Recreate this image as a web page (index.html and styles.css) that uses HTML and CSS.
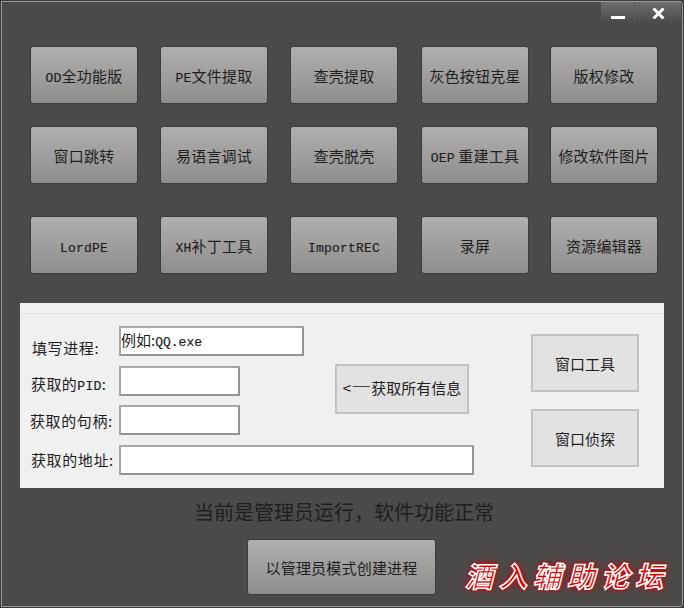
FILE: index.html
```html
<!DOCTYPE html>
<html lang="zh-CN">
<head>
<meta charset="utf-8">
<title>工具箱</title>
<link rel="stylesheet" href="styles.css">
</head>
<body>
<div class="window">
  <div class="title-bar">
    <button class="win-btn min" aria-label="最小化"><svg width="14" height="3"><rect width="14" height="3" fill="#fff"/></svg></button>
    <button class="win-btn close" aria-label="关闭"><svg width="13" height="11" viewBox="0 0 13 11"><path d="M1.5 .5 11.5 10.5M11.5 .5 1.5 10.5" stroke="#fff" stroke-width="3"/></svg></button>
  </div>
  <div class="tools">
    <button class="tool"><span class="lat">OD</span>全功能版</button>
    <button class="tool"><span class="lat">PE</span>文件提取</button>
    <button class="tool">查壳提取</button>
    <button class="tool">灰色按钮克星</button>
    <button class="tool">版权修改</button>
    <button class="tool">窗口跳转</button>
    <button class="tool">易语言调试</button>
    <button class="tool">查壳脱壳</button>
    <button class="tool"><span class="lat">OEP</span> 重建工具</button>
    <button class="tool">修改软件图片</button>
    <button class="tool lat-btn"><span class="lat">LordPE</span></button>
    <button class="tool"><span class="lat">XH</span>补丁工具</button>
    <button class="tool lat-btn"><span class="lat">ImportREC</span></button>
    <button class="tool">录屏</button>
    <button class="tool">资源编辑器</button>
  </div>
  <section class="panel">
    <div class="panel-top"></div>
    <div class="panel-body">
      <div class="form">
        <label class="label first">填写进程:</label>
        <div class="field wide-1"><span>例如:</span><span class="lat">QQ.exe</span></div>
        <label class="label second">获取的<span class="lat">PID</span>:</label>
        <div class="field row-2"></div>
        <button class="flat get-all">&lt;<span class="dash">—</span>获取所有信息</button>
        <label class="label third">获取的句柄:</label>
        <div class="field row-3"></div>
        <label class="label fourth">获取的地址:</label>
        <div class="field wide-2"></div>
      </div>
      <div class="side">
        <button class="flat side-btn">窗口工具</button>
        <button class="flat side-btn">窗口侦探</button>
      </div>
    </div>
  </section>
  <p class="status">当前是管理员运行&#65292;软件功能正常</p>
  <div class="bottom">
    <button class="tool admin">以管理员模式创建进程</button>
  </div>
  <div class="watermark">酒入辅助论坛</div>
</div>
</body>
</html>
```

FILE: styles.css
```css
* { box-sizing: border-box; }
html, body { margin: 0; padding: 0; }
body { width: 684px; height: 608px; background: #3a3a3a; overflow: hidden; }
button { margin: 0; padding: 0; font: inherit; color: inherit; cursor: default; }
.window {
  position: relative;
  width: 684px; height: 608px;
  background: #4c4a48;
  border: 1px solid #3a3a3a;
  border-radius: 0 4px 4px 0;
  box-shadow: inset 0 0 0 1px #9a9a9a;
  font-family: "Noto Sans CJK SC", "Noto Sans", sans-serif;
  font-size: 15px;
  color: #1e1e1e;
}
.lat {
  font-family: "Liberation Mono", "Noto Sans CJK SC", monospace;
  font-size: 13px;
  -webkit-text-stroke: .2px #1e1e1e;
}
.title-bar { display: flex; justify-content: flex-end; height: 45px; padding: 1px 2px 0 0; }
.win-btn {
  height: 21px; border: 0; display: flex; justify-content: center;
  background: linear-gradient(#6e6e6e, #4c4a48);
}
.min { width: 34px; align-items: flex-end; padding-bottom: 4px; border-right: 1px solid #5c5a58; }
.close { width: 46px; align-items: flex-start; padding-top: 6px; }
.tools {
  display: grid;
  grid-template-columns: 130px 130px 131px 129px 108px;
  grid-template-rows: 80px 90px 58px;
  margin-left: 29px;
}
.tool {
  width: 108px; height: 58px;
  border: 1px solid #3c3c3c; border-radius: 3px;
  background: linear-gradient(#b0afae, #8f8e8d);
  color: #1e1e1e;
  letter-spacing: .2px;
}
.lat-btn { padding-top: 1px; }
.panel {
  margin: 29px 0 0 19px; width: 644px; height: 185px;
  background: #f0f0f0;
}
.panel-top { height: 11px; border-bottom: 1px solid #e2e2e2; }
.panel-body { display: flex; padding-top: 12px; }
.form {
  display: grid;
  grid-template-columns: 99px 121px 95px 134px 5px;
  grid-template-rows: 30px 30px 30px 30px;
  row-gap: 9.5px;
  width: 454px;
  flex: none;
  height: 148px;
}
.label { grid-column: 1; font-size: 15px; white-space: nowrap; color: #1e1e1e; line-height: 30px; }
.first { grid-row: 1; padding-left: 12px; margin-top: 7px; letter-spacing: .6px; }
.second { grid-row: 2; padding-left: 11px; margin-top: 3px; letter-spacing: .4px; }
.third { grid-row: 3; padding-left: 10px; margin-top: 1px; letter-spacing: .6px; }
.fourth { grid-row: 4; padding-left: 11px; letter-spacing: .6px; }
.field {
  grid-column: 2;
  width: 121px; height: 30px;
  border: 2px solid #a8a8a8;
  background: #fff;
  border-right-color: #949494;
  border-bottom-color: #949494;
  line-height: 24px;
  white-space: nowrap;
}
.row-2 { grid-row: 2; }
.row-3 { grid-row: 3; }
.wide-1 { grid-column: 2 / 4; grid-row: 1; width: 185px; padding-left: 0; }
.wide-2 { grid-column: 2 / 6; grid-row: 4; width: 355px; }
.flat {
  border: 2px solid #c2c2c2;
  background: #e2e2e2;
  color: #1e1e1e;
}
.get-all {
  grid-column: 4; grid-row: 2 / 4;
  width: 134px; height: 50px; margin-top: -2px; padding-bottom: 2px;
  white-space: nowrap; font-size: 15px;
}
.dash { font-size: 20px; line-height: 0; }
.side { display: flex; flex-direction: column; gap: 17px; margin-left: 57px; padding-top: 8px; }
.side-btn { width: 108px; height: 58px; }
.status {
  margin: 9px 0 0; padding-left: 193px; color: #1e1e1e;
  font-size: 20px; line-height: 30px;
}
.bottom { margin: 12px 0 0 246px; }
.admin { width: 189px; height: 56px; }
.watermark {
  position: absolute; left: 464px; top: 556px;
  color: #e00000; font-weight: 700;
  font-size: 28px; line-height: 36px; letter-spacing: 6px; white-space: nowrap;
  font-style: italic;
  -webkit-text-stroke: 1.5px #fff;
  text-shadow: 0 0 3px #e00000, 0 0 5px #e00000, 0 0 7px #c00000;
}
```
